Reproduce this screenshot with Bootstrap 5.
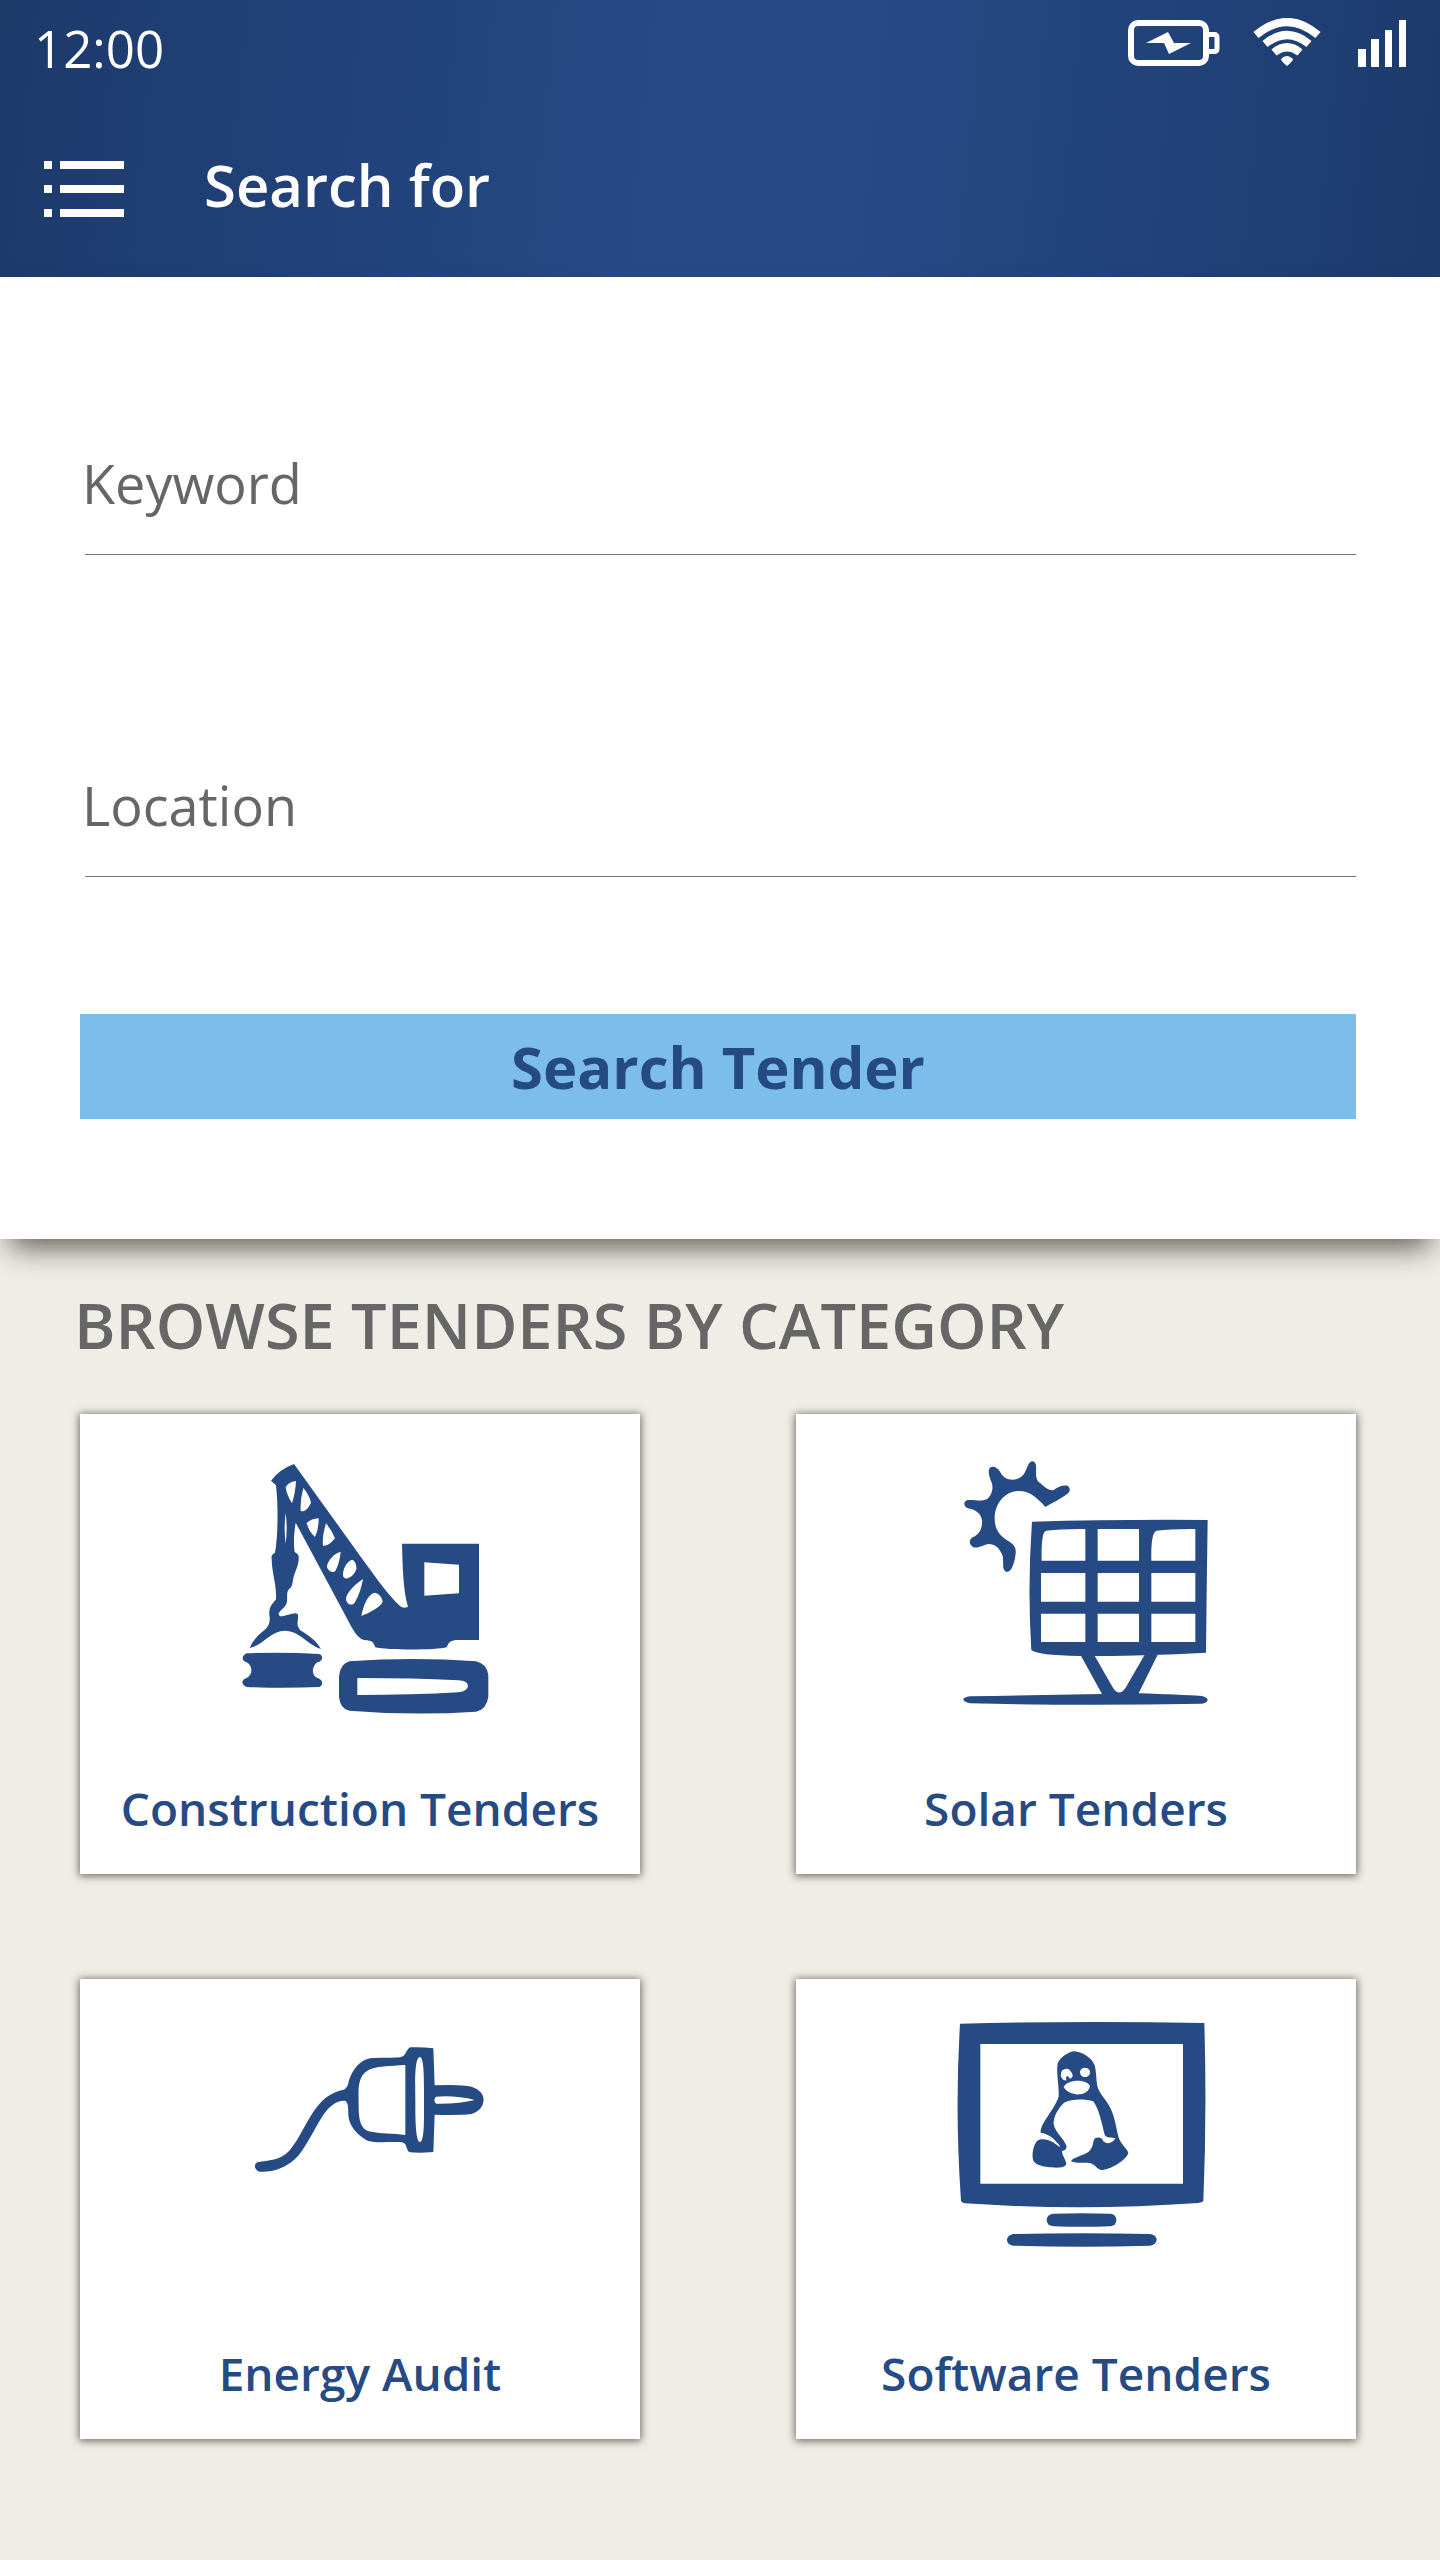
<!DOCTYPE html>
<html lang="en">
<head>
<meta charset="utf-8">
<meta name="viewport" content="width=device-width, initial-scale=1">
<title>Search for tenders</title>
<link href="https://cdn.jsdelivr.net/npm/bootstrap@5.3.0/dist/css/bootstrap.min.css" rel="stylesheet">
<style>
  body { background: #efede5; font-family: "Open Sans", "Noto Sans", sans-serif; color: #666; }
  .app-header { background: linear-gradient(96deg, #1d3a6b 0%, #21427a 25%, #264a84 45%, #264a84 60%, #21427a 80%, #1d3a6b 100%); padding: 18px 34px 52px; }
  .clock { font-size: 51px; line-height: 60px; }
  .status-icons { gap: 33px; }
  .title-row { margin-top: 67px; padding-left: 10px; gap: 80px; }
  .menu-btn { padding: 16px 0 8px; border: 0; border-radius: 0; line-height: 0; }
  .app-title { font-size: 58px; line-height: 80px; font-weight: 600; }
  .edge { padding-left: 80px; padding-right: 84px; }
  .search-panel { padding-top: 168px; padding-bottom: 120px; box-shadow: 0 18px 28px -10px rgba(40, 38, 30, .75); }
  .line-field > * { grid-area: 1 / 1; }
  .line-field label { padding-left: 2px; font-size: 54px; line-height: 76px; pointer-events: none; }
  .line-field input:not(:placeholder-shown) + label { visibility: hidden; }
  .line-input, .line-input:focus {
    height: 110px; padding: 0 0 34px 2px; border: 0; border-radius: 0; box-shadow: none;
    font-size: 54px; line-height: 76px; color: #666;
    background: linear-gradient(#777, #777) 5px 100% / calc(100% - 5px) 1px no-repeat;
  }
  .fields { gap: 212px; }
  .search-btn, .search-btn:hover { margin-top: 137px; height: 105px; padding: 0; border: 0; border-radius: 0; background: #7cbde9; color: #264a84; font-size: 58px; line-height: 105px; font-weight: 700; }
  .browse { padding-top: 45px; padding-bottom: 121px; }
  .browse-title { font-size: 63px; line-height: 82px; font-weight: 600; margin: 0 0 48px -6px; }
  .tile-grid { --bs-gutter-x: 156px; --bs-gutter-y: 105px; }
  .tile { border: 0; border-radius: 0; padding: 26px 0 36px; color: #264a84; box-shadow: 0 1px 8px 1px rgba(50, 50, 40, .7); }
  .tile svg { width: 300px; height: 300px; fill: currentColor; }
  .tile-name { margin-top: 38px; font-size: 46px; line-height: 60px; font-weight: 600; }
</style>
<script src="https://cdn.jsdelivr.net/npm/bootstrap@5.3.0/dist/js/bootstrap.bundle.min.js" defer></script>
</head>
<body>

<header class="app-header text-white">
  <div class="d-flex justify-content-between align-items-start">
    <span class="clock">12:00</span>
    <div class="status-icons d-flex">
      <svg width="92" height="50" viewBox="0 0 92 50" fill="none" stroke="#fff" aria-hidden="true">
        <rect x="3" y="5" width="75" height="40" rx="7" stroke-width="6"/>
        <path d="M79 16.500h7q3 0 3 3v11q0 3-3 3h-7" stroke-width="5"/>
        <path fill="#fff" stroke="none" d="M18 25 40 14l6 11 17 0-22 11-5-11z"/>
      </svg>
      <svg width="68" height="50" viewBox="0 0 68 50" fill="none" stroke="#fff" stroke-width="8" aria-hidden="true">
        <path d="M3 17Q34-9 65 17"/>
        <path d="M12 26Q34 8 56 26"/>
        <path d="M21 34.500Q34 24 47 34.500"/>
        <path fill="#fff" stroke="none" d="M28 41q6-6 12 0 0 2-6 7-6-5-6-7z"/>
      </svg>
      <svg class="ms-1" width="48" height="50" viewBox="0 0 48 50" fill="#fff" aria-hidden="true">
        <path d="M0 31h8v18H0zM13 21h8v28h-8zM27 12h7v37h-7zM41 2h7v47h-7z"/>
      </svg>
    </div>
  </div>
  <div class="title-row d-flex align-items-start">
    <button type="button" class="btn menu-btn" aria-label="Menu">
      <svg width="80" height="56" viewBox="0 0 80 56" fill="#fff" aria-hidden="true">
        <path d="M0 0h8v8H0zM16 0h64v8H16zM0 24h8v8H0zM16 24h64v8H16zM0 48h8v8H0zM16 48h64v8H16z"/>
      </svg>
    </button>
    <h1 class="app-title mb-0">Search for</h1>
  </div>
</header>

<main>
  <form class="search-panel edge bg-white">
    <div class="fields d-flex flex-column">
      <div class="line-field d-grid align-items-start">
        <input class="form-control line-input" type="text" id="keyword" placeholder=" ">
        <label for="keyword">Keyword</label>
      </div>
      <div class="line-field d-grid align-items-start">
        <input class="form-control line-input" type="text" id="location" placeholder=" ">
        <label for="location">Location</label>
      </div>
    </div>
    <button type="button" class="btn search-btn d-block w-100">Search Tender</button>
  </form>

  <section class="browse edge">
    <h2 class="browse-title">BROWSE TENDERS BY CATEGORY</h2>
    <div class="row row-cols-2 tile-grid">
      <div class="col">
        <a href="#" class="card tile align-items-center text-decoration-none">
          <svg viewBox="-30 0 900 900" fill-rule="evenodd" aria-hidden="true">
            <path d="M222 72Q178 88 153 122L168 136C175 200 174 290 165 338Q152 345 155 355C155 400 170 430 168 478C160 490 146 498 148 525C152 545 146 558 136 568Q100 595 89 624C130 616 150 573 195 572C240 573 260 612 303 627Q290 600 240 570C225 550 238 540 233 522C222 514 200 530 180 529C166 518 192 508 199 492C205 475 197 458 207 448C222 436 215 420 225 398Q238 368 236 350Q236 343 224 336C220 310 222 280 227 248L395 562Q415 598 432 600C460 601 460 608 466 622C500 631 650 631 680 622C688 600 700 600 720 600H777V311H546C548 380 549 450 564 500Q550 507 540 498C500 460 470 415 440 375Z
              M228 123Q205 126 197 142Q200 165 216 190Q226 160 228 123Z
              M250 144Q240 180 242 212Q258 220 273 188Q268 165 250 144Z
              M296 235Q275 236 260 249Q265 272 285 291Q296 270 296 235Z
              M318 250Q306 290 309 317Q325 320 345 295Q335 270 318 250Z
              M362 336C345 337 320 365 321 381C325 395 340 400 346 393C356 375 360 355 362 336Z
              M397 360C382 360 365 392 370 410C380 424 402 408 409 388C410 375 405 362 397 360Z
              M429 417C405 432 372 465 379 482C384 496 398 497 404 488C418 465 425 440 429 417Z
              M424 528C430 495 445 460 465 458C480 462 492 480 486 490C470 508 445 520 424 528Z
              M197 218Q191 265 197 312Q203 265 197 218Z
              M613 367 717 374V460L613 467Z"/>
            <path d="M80 640Q190 636 298 642C312 648 308 664 292 667C274 680 274 706 292 714C308 718 312 734 298 741Q190 746 80 741C62 734 64 718 80 714C99 704 99 678 80 667C64 662 64 648 80 640Z"/>
            <path d="M388 664Q580 650 768 664Q802 672 805 706V770Q800 808 768 815Q580 828 388 812Q360 806 357 770V710Q360 672 388 664ZM412 714V765Q580 765 715 757Q744 752 744 737Q742 722 715 721Q580 714 412 714Z"/>
          </svg>
          <span class="tile-name">Construction Tenders</span>
        </a>
      </div>
      <div class="col">
        <a href="#" class="card tile align-items-center text-decoration-none">
          <svg viewBox="-42 0 900 900" fill-rule="evenodd" aria-hidden="true">
            <path d="M316 201C290 170 265 153 238 153C195 153 164 190 164 235C164 270 180 288 205 303C218 312 229 318 227 340C224 370 214 396 201 396C184 392 192 370 188 348C180 325 165 312 146 312C130 314 118 326 100 322C86 314 86 300 98 292C116 284 128 268 126 240C122 216 100 208 84 205C70 198 68 184 84 180C104 178 120 186 140 178C158 164 160 140 155 128C148 110 142 92 150 83C160 76 172 84 178 92C188 110 198 119 220 119C254 116 256 92 264 76C270 62 282 58 288 74C290 94 284 115 296 126C310 136 322 152 340 151C355 140 370 134 384 138C392 146 390 156 382 161C362 178 335 188 316 201Z"/>
            <path d="M276 245Q530 238 803 240Q800 440 798 638Q620 648 420 648Q290 646 274 630Q262 440 276 245Z
              M436 267Q370 266 318 272Q303 276 305 362H436ZM473 267H597V362H473ZM766 267Q700 266 650 272Q632 276 634 362H766Z
              M303 399H436V485H303ZM473 399H597V485H473ZM634 399H766V485H634Z
              M303 521H436V606H303ZM473 521H597V606H473ZM634 521H766V606H634Z"/>
            <path d="M422 646H463L518 742Q537 772 556 745L614 644H653L596 760Q720 764 785 768Q803 772 803 780Q800 790 785 791Q440 798 90 790Q70 786 70 778Q72 772 90 769Q280 766 486 762Z"/>
          </svg>
          <span class="tile-name">Solar Tenders</span>
        </a>
      </div>
      <div class="col">
        <a href="#" class="card tile align-items-center text-decoration-none">
          <svg viewBox="-60 -45 900 900" fill-rule="evenodd" aria-hidden="true">
            <path d="M540 82Q575 80 610 85L614 196Q690 192 725 200Q761 212 761 240Q759 270 725 282Q690 286 614 284L610 396Q570 400 540 397C526 392 534 370 516 367C480 364 440 370 413 362C385 348 356 318 355 285C354 265 356 250 346 243C325 240 300 255 280 285C250 330 225 390 195 417C165 445 125 458 88 455C72 450 70 432 84 426C115 420 150 422 178 392C210 355 230 300 260 262C285 228 315 215 338 210C352 206 354 195 357 180C370 145 392 120 420 115C455 111 490 115 513 111C530 106 526 92 540 82Z
              M526 135C480 138 435 138 412 152C380 172 386 215 386 260C386 300 392 325 416 334C450 342 490 340 526 345Z
              M570 111C552 112 556 200 556 240C556 290 556 366 570 366C584 366 582 290 582 240C582 200 584 112 570 111Z
              M618 230Q680 226 734 240Q690 252 618 251Q608 240 618 230Z"/>
          </svg>
          <span class="tile-name">Energy Audit</span>
        </a>
      </div>
      <div class="col">
        <a href="#" class="card tile align-items-center text-decoration-none">
          <svg viewBox="-42 15 900 900" fill-rule="evenodd" aria-hidden="true">
            <path d="M60 71Q420 62 793 69Q801 340 790 604Q785 608 775 609Q420 634 75 610Q66 608 63 603Q44 330 60 71ZM121 132V551H729V132Z"/>
            <path d="M340 641Q425 638 512 641Q529 644 529 660Q529 676 512 679Q425 682 340 679Q320 676 320 660Q320 644 340 641Z"/>
            <path d="M220 702Q425 698 630 702Q650 706 650 719Q648 734 630 737Q425 743 220 737Q201 734 201 719Q202 706 220 702Z"/>
            <path d="M403 154C425 156 455 172 464 196C470 220 468 245 474 265C484 290 505 305 516 335C528 365 530 395 538 418C545 435 560 445 565 458C562 478 510 510 484 510C470 508 468 495 452 490C432 486 412 492 393 484C395 474 425 468 445 456C464 440 455 425 466 414C478 410 486 412 490 424C500 434 520 430 526 414C515 412 500 415 494 404C486 372 478 330 460 304C435 296 395 296 372 308C355 325 340 348 341 372C345 398 376 420 380 440C378 450 374 450 366 453C366 468 378 478 379 492C375 504 350 504 335 502C315 500 290 498 280 482C274 462 280 435 292 422C310 412 335 420 358 441C362 438 355 432 350 427C338 410 322 402 302 398C300 370 340 335 356 290C358 260 348 220 353 190C362 170 388 155 403 154Z
              M379 206C364 206 360 222 364 232C368 240 374 242 380 241C376 234 378 228 384 229L390 236C398 234 400 228 396 220C392 211 387 206 379 206Z
              M435 203A15 14 0 1 0 435.100 203Z
              M371 262C380 236 440 236 450 258C444 292 388 290 371 262Z"/>
          </svg>
          <span class="tile-name">Software Tenders</span>
        </a>
      </div>
    </div>
  </section>
</main>

</body>
</html>
